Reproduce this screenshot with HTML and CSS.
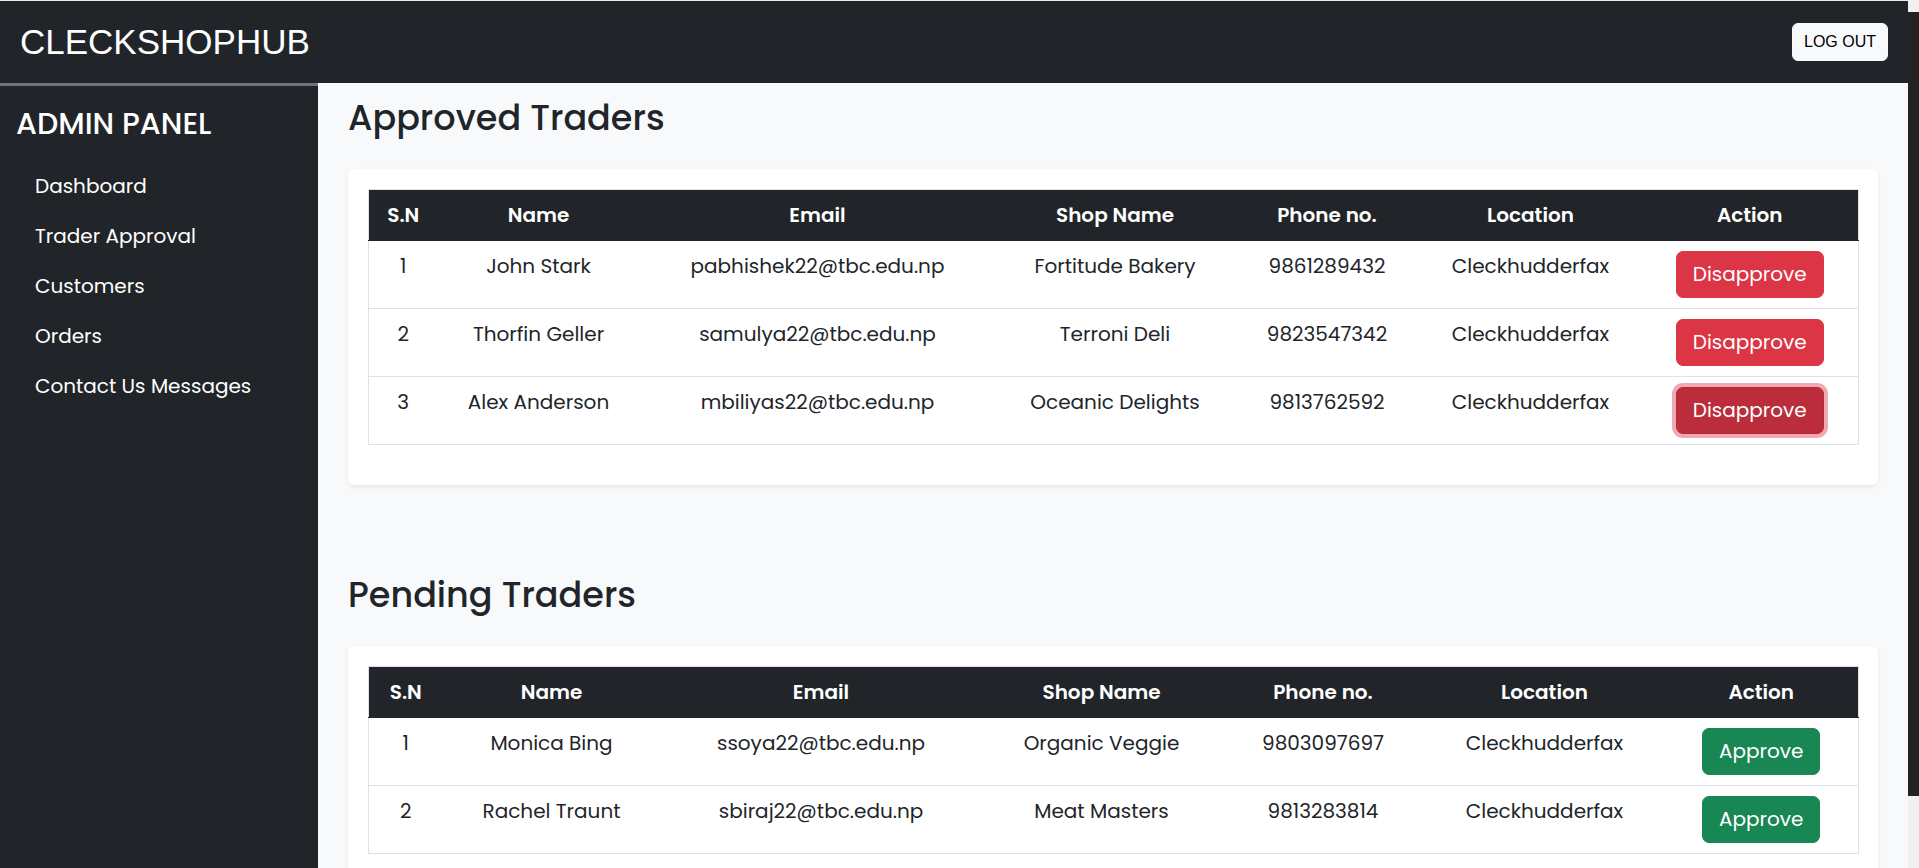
FILE: index.html
```html
<!DOCTYPE html>
<html lang="en">
<head>
<meta charset="utf-8">
<title>CleckShopHub Admin - Trader Approval</title>
<link rel="stylesheet" href="styles.css">
</head>
<body>
<header class="topbar">
  <div class="brand">CLECKSHOPHUB</div>
  <button class="btn-logout" type="button">LOG OUT</button>
</header>
<div class="layout">
  <aside class="sidebar">
    <h4 class="sidebar-title">ADMIN PANEL</h4>
    <ul class="nav">
      <li><a href="#">Dashboard</a></li>
      <li><a href="#">Trader Approval</a></li>
      <li><a href="#">Customers</a></li>
      <li><a href="#">Orders</a></li>
      <li><a href="#">Contact Us Messages</a></li>
    </ul>
  </aside>
  <main class="main">
    <section class="section">
      <h2 class="section-title">Approved Traders</h2>
      <div class="card">
        <table class="traders approved">
          <colgroup>
            <col class="c-sn"><col class="c-name"><col class="c-email"><col class="c-shop"><col class="c-phone"><col class="c-loc"><col class="c-act">
          </colgroup>
          <thead>
            <tr><th>S.N</th><th>Name</th><th>Email</th><th>Shop Name</th><th>Phone no.</th><th>Location</th><th>Action</th></tr>
          </thead>
          <tbody>
            <tr><td>1</td><td>John Stark</td><td>pabhishek22@tbc.edu.np</td><td>Fortitude Bakery</td><td>9861289432</td><td>Cleckhudderfax</td><td><button class="btn btn-danger" type="button">Disapprove</button></td></tr>
            <tr><td>2</td><td>Thorfin Geller</td><td>samulya22@tbc.edu.np</td><td>Terroni Deli</td><td>9823547342</td><td>Cleckhudderfax</td><td><button class="btn btn-danger" type="button">Disapprove</button></td></tr>
            <tr><td>3</td><td>Alex Anderson</td><td>mbiliyas22@tbc.edu.np</td><td>Oceanic Delights</td><td>9813762592</td><td>Cleckhudderfax</td><td><button class="btn btn-danger is-focused" type="button">Disapprove</button></td></tr>
          </tbody>
        </table>
      </div>
    </section>
    <section class="section">
      <h2 class="section-title">Pending Traders</h2>
      <div class="card">
        <table class="traders pending">
          <colgroup>
            <col class="c-sn"><col class="c-name"><col class="c-email"><col class="c-shop"><col class="c-phone"><col class="c-loc"><col class="c-act">
          </colgroup>
          <thead>
            <tr><th>S.N</th><th>Name</th><th>Email</th><th>Shop Name</th><th>Phone no.</th><th>Location</th><th>Action</th></tr>
          </thead>
          <tbody>
            <tr><td>1</td><td>Monica Bing</td><td>ssoya22@tbc.edu.np</td><td>Organic Veggie</td><td>9803097697</td><td>Cleckhudderfax</td><td><button class="btn btn-success" type="button">Approve</button></td></tr>
            <tr><td>2</td><td>Rachel Traunt</td><td>sbiraj22@tbc.edu.np</td><td>Meat Masters</td><td>9813283814</td><td>Cleckhudderfax</td><td><button class="btn btn-success" type="button">Approve</button></td></tr>
          </tbody>
        </table>
      </div>
    </section>
  </main>
</div>
<div class="scrollbar" aria-hidden="true"><div class="scrollbar-thumb"></div></div>
</body>
</html>
```
FILE: styles.css
```css
* {
  box-sizing: border-box;
}

html {
  overflow: hidden;
}

body {
  margin: 0 11px 0 0;
  font-family: "Poppins", "Open Sans", sans-serif;
  color: #212529;
  background: #f8f9fa;
}

/* fake window scrollbar drawn over the right edge */
.scrollbar {
  position: fixed;
  top: 0;
  right: 0;
  width: 11px;
  height: 100vh;
  background: #f0f0f0;
  padding-top: 12px;
}

.scrollbar-thumb {
  height: 784px;
  background: #232323;
}

.topbar {
  height: 83px;
  background: #212529;
  border-top: 1px solid #e9ecef;
  display: flex;
  align-items: center;
  justify-content: space-between;
  padding: 0 20px 0 20px;
}

.brand {
  font-family: "Liberation Sans", Arial, sans-serif;
  font-size: 35px;
  color: #ffffff;
  line-height: 1.2;
}

.btn-logout {
  font-family: "Liberation Sans", Arial, sans-serif;
  font-size: 16px;
  line-height: 24px;
  padding: 6px 11px;
  color: #000;
  background: #f8f9fa;
  border: 1px solid #f8f9fa;
  border-radius: 6px;
}

.layout {
  display: flex;
  align-items: stretch;
}

.sidebar {
  width: 318px;
  flex: 0 0 318px;
  background: #212529;
  border-top: 3px solid #6c757d;
  padding: 20px 0 0 16px;
  color: #fff;
}

.sidebar-title {
  margin: 0 0 19px;
  font-size: 30px;
  line-height: 36px;
  font-weight: 500;
  color: #fff;
}

.nav {
  list-style: none;
  margin: 0;
  padding: 0 0 0 19px;
}

.nav a {
  display: block;
  padding: 10px 0;
  font-size: 20px;
  line-height: 30px;
  color: #fff;
  text-decoration: none;
}

.main {
  flex: 1;
  min-width: 0;
  background: #f8f9fa;
  padding: 0 30px;
}

.section-title {
  font-size: 35px;
  line-height: 44px;
  font-weight: 500;
  margin: 13px 0 29px;
  color: #212529;
}

.section + .section .section-title {
  margin-top: 88px;
}

.card {
  background: #fff;
  border-radius: 6px;
  box-shadow: 0 2px 4px rgba(0, 0, 0, 0.075);
  padding: 20px 20px 40px;
  margin-bottom: 60px;
}

.traders {
  width: 100%;
  table-layout: fixed;
  border-collapse: collapse;
  border: 1px solid #dee2e6;
  font-size: 20px;
  line-height: 30px;
}

.traders th,
.traders td {
  padding: 10px 4px;
  text-align: center;
  vertical-align: top;
  border-bottom: 1px solid #dee2e6;
  white-space: nowrap;
}

.traders th {
  background: #212529;
  color: #fff;
  font-weight: 600;
  border-bottom-color: #212529;
}

.traders td {
  color: #212529;
}

.approved .c-sn { width: 69px; }
.approved .c-name { width: 202px; }
.approved .c-email { width: 356px; }
.approved .c-shop { width: 239px; }
.approved .c-phone { width: 185px; }
.approved .c-loc { width: 222px; }
.approved .c-act { width: 217px; }

.pending .c-sn { width: 74px; }
.pending .c-name { width: 218px; }
.pending .c-email { width: 321px; }
.pending .c-shop { width: 240px; }
.pending .c-phone { width: 203px; }
.pending .c-loc { width: 240px; }
.pending .c-act { width: 194px; }

.btn {
  font-family: inherit;
  font-size: 20px;
  line-height: 29px;
  padding: 8px 16px;
  border-radius: 7px;
  border: 1px solid transparent;
  color: #fff;
}

.btn-danger {
  background: #dc3545;
  border-color: #dc3545;
}

.btn-danger.is-focused {
  background: #bb2d3b;
  border-color: #b02a37;
  box-shadow: 0 0 0 4px rgba(225, 83, 97, 0.5);
}

.btn-success {
  background: #198754;
  border-color: #198754;
}
```
